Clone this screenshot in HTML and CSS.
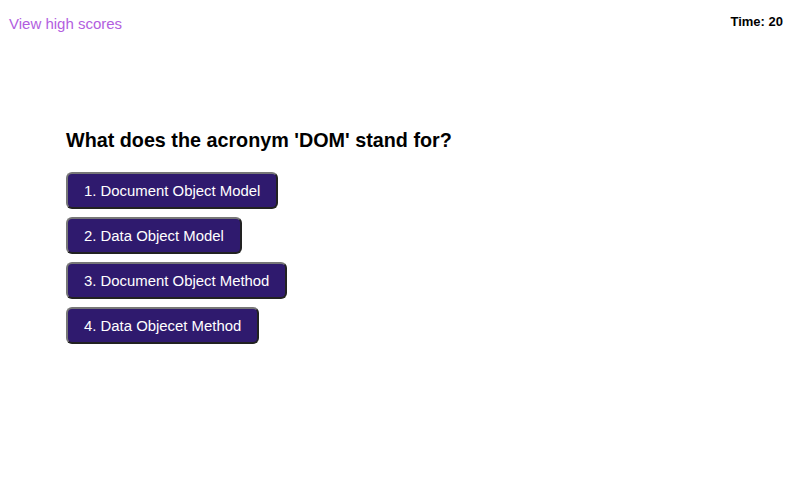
FILE: index.html
```html
<!DOCTYPE html>
<html>
<head>
<meta charset="utf-8">
<link rel="stylesheet" href="styles.css">
</head>
<body>
<header class="top">
  <a class="scores" href="#">View high scores</a>
  <div class="timer">Time: 20</div>
</header>
<main class="quiz">
  <h1 class="question">What does the acronym 'DOM' stand for?</h1>
  <div class="choices">
    <button class="choice">1. Document Object Model</button>
    <button class="choice">2. Data Object Model</button>
    <button class="choice">3. Document Object Method</button>
    <button class="choice">4. Data Objecet Method</button>
  </div>
</main>
</body>
</html>
```
FILE: styles.css
```css
body {
  margin: 0;
  font-family: "Liberation Sans", Arial, sans-serif;
  background: #fff;
  color: #000;
}
.top {
  display: flex;
  justify-content: space-between;
  align-items: flex-start;
  padding: 14px 8px 0 9px;
}
.scores {
  color: #b25ee0;
  text-decoration: none;
  font-size: 15px;
  line-height: 20px;
}
.timer {
  font-weight: bold;
  font-size: 13px;
  line-height: 16px;
}
.quiz {
  padding: 94px 0 0 66px;
}
.question {
  margin: 0 0 20px;
  font-size: 19.75px;
  line-height: 24px;
  font-weight: bold;
}
.choices {
  display: flex;
  flex-direction: column;
  align-items: flex-start;
  gap: 8px;
}
.choice {
  font-family: "Liberation Sans", Arial, sans-serif;
  font-size: 14.9px;
  color: #fff;
  background: #2f1a6e;
  border: 2px outset #777;
  border-radius: 6px;
  padding: 0 16px;
  height: 37px;
}
```
